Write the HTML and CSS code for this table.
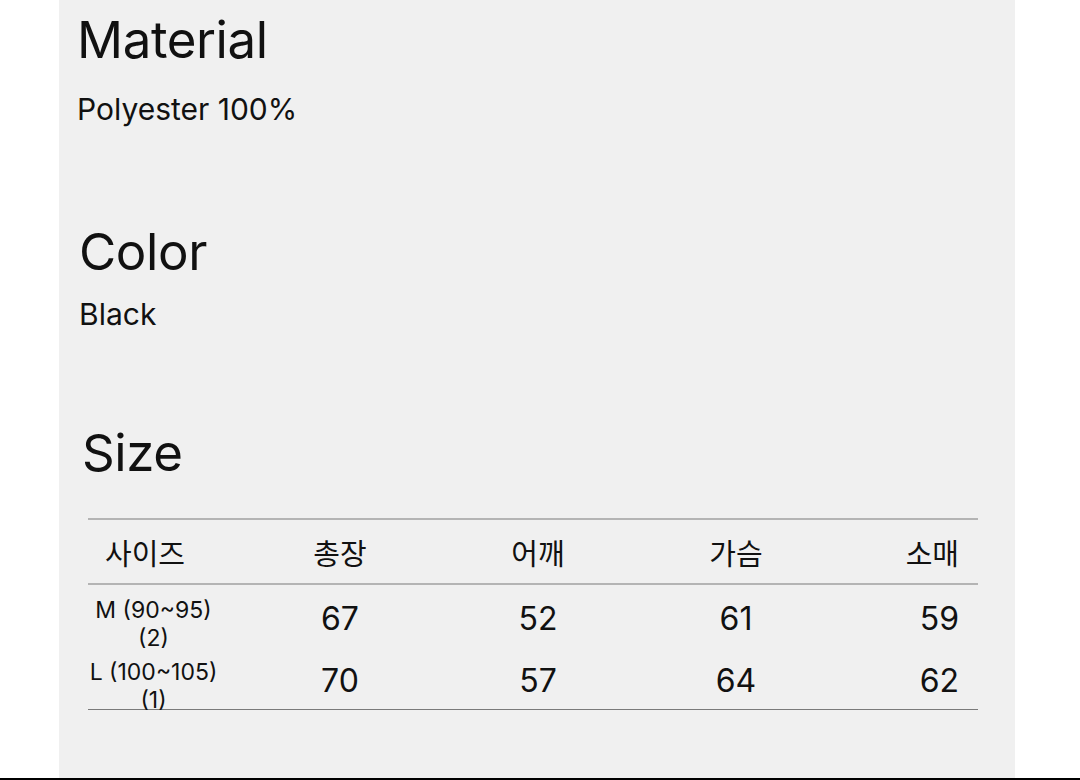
FILE: index.html
```html
<!DOCTYPE html>
<html lang="ko">
<head>
<meta charset="utf-8">
<title>Product details</title>
<link rel="stylesheet" href="styles.css">
</head>
<body>
<div class="page">
  <main class="panel">
    <section class="block block-material">
      <h2 class="heading">Material</h2>
      <p class="value">Polyester 100%</p>
    </section>
    <section class="block block-color">
      <h2 class="heading">Color</h2>
      <p class="value">Black</p>
    </section>
    <section class="block block-size">
      <h2 class="heading">Size</h2>
    </section>
    <div class="size-table">
      <div class="row head">
        <div class="cell label">사이즈</div>
        <div class="cell">총장</div>
        <div class="cell">어깨</div>
        <div class="cell">가슴</div>
        <div class="cell last">소매</div>
      </div>
      <div class="row body">
        <div class="cell label">M (90~95)<br>(2)</div>
        <div class="cell">67</div>
        <div class="cell">52</div>
        <div class="cell">61</div>
        <div class="cell last">59</div>
      </div>
      <div class="row body">
        <div class="cell label">L (100~105)<br>(1)</div>
        <div class="cell">70</div>
        <div class="cell">57</div>
        <div class="cell">64</div>
        <div class="cell last">62</div>
      </div>
    </div>
  </main>
</div>
<div class="bottom-bar"></div>
</body>
</html>
```

FILE: styles.css
```css
* { box-sizing: border-box; }
html, body { margin: 0; padding: 0; background: #ffffff; }
body {
  font-family: Inter, "Noto Sans CJK KR", "Noto Sans", sans-serif;
  color: #111111;
  width: 1080px;
  height: 780px;
  overflow: hidden;
}
.page {
  height: 778px;
  display: flex;
}
.panel {
  margin-left: 59px;
  width: 956px;
  height: 778px;
  background: #f0f0f0;
  padding-top: 9px;
}
.bottom-bar {
  height: 2px;
  background: #000000;
}
.block { padding-left: 18px; }
.block-color { padding-left: 20px; margin-top: 94px; }
.block-size { padding-left: 23px; margin-top: 90px; }
.heading {
  margin: 0;
  font-size: 51px;
  font-weight: 400;
  line-height: 62px;
  letter-spacing: -0.4px;
}
.value {
  margin: 0;
  font-size: 30px;
  line-height: 36px;
  font-weight: 400;
}
.block-material .value { margin-top: 20px; }
.block-color .value { margin-top: 13px; }

.size-table {
  margin: 34px 0 0 29px;
  width: 890px;
  border-top: 2px solid #b4b4b4;
  border-bottom: 1.5px solid #7a7a7a;
}
.row {
  display: grid;
  grid-template-columns: 153px 198px 198px 198px 143px;
  align-items: center;
}
.row.head {
  height: 65px;
  border-bottom: 2px solid #b4b4b4;
  font-size: 29px;
  font-family: "Noto Sans CJK KR", Inter, sans-serif;
}
.row.body { height: 62px; font-size: 32px; }
.cell { text-align: center; }
.cell.last { text-align: right; padding-right: 19px; }
.head .cell.label { text-align: left; padding-left: 17px; }
.body .cell.label {
  font-size: 23px;
  line-height: 28px;
  padding-right: 22px;
  padding-top: 11px;
}
```
